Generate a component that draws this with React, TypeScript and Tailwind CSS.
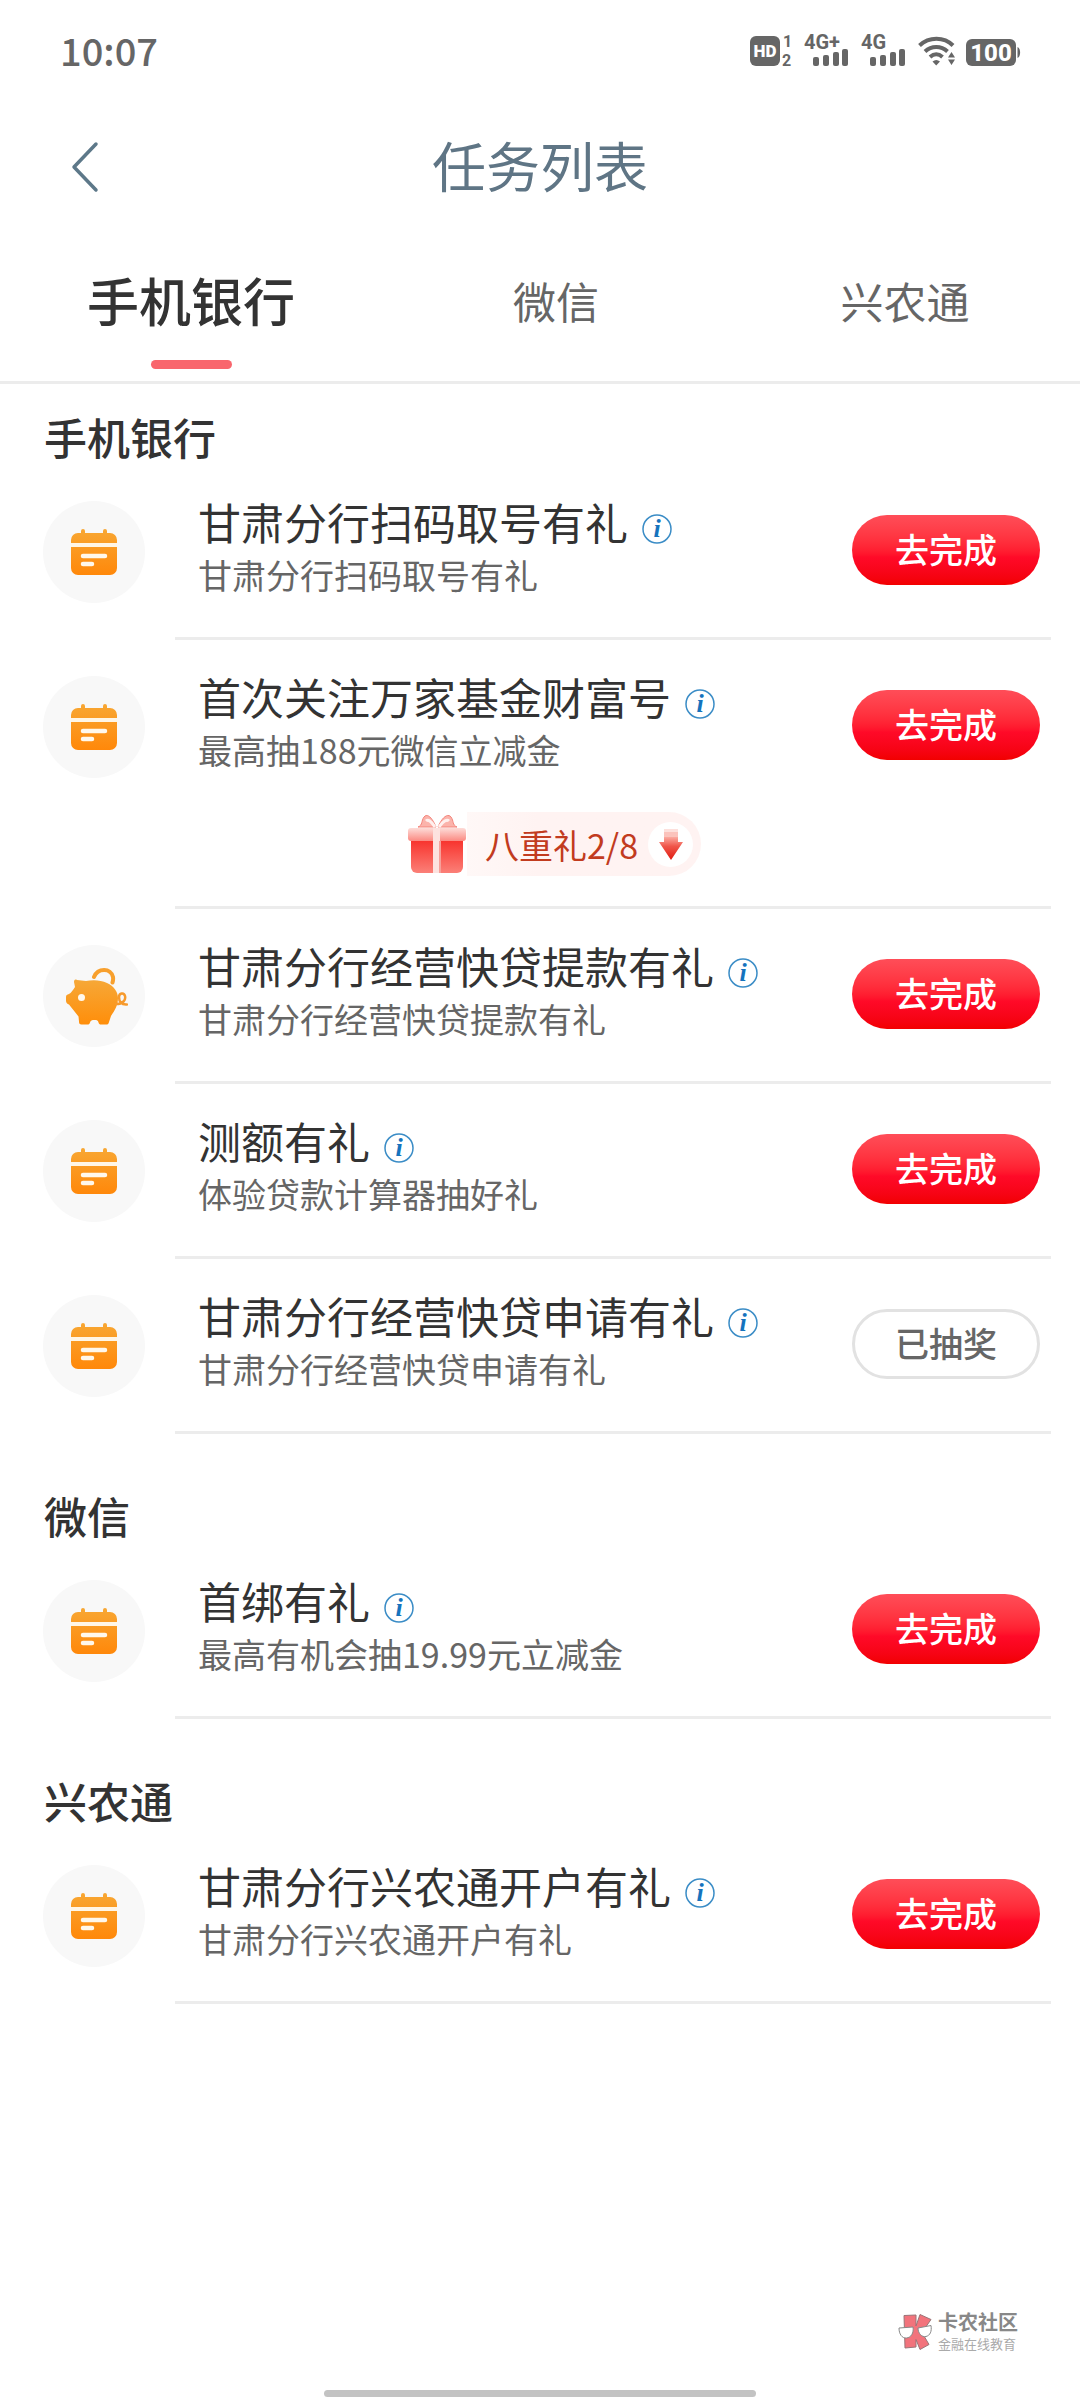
import { useState } from "react";
import clsx from "clsx";

type Task = {
  title: string;
  desc: string;
  icon: "calendar" | "piggy";
  done?: boolean;
  bonus?: string;
};

const tabs = ["手机银行", "微信", "兴农通"];

const sections: { name: string; tasks: Task[] }[] = [
  {
    name: "手机银行",
    tasks: [
      {
        title: "甘肃分行扫码取号有礼",
        desc: "甘肃分行扫码取号有礼",
        icon: "calendar",
      },
      {
        title: "首次关注万家基金财富号",
        desc: "最高抽188元微信立减金",
        icon: "calendar",
        bonus: "八重礼2/8",
      },
      {
        title: "甘肃分行经营快贷提款有礼",
        desc: "甘肃分行经营快贷提款有礼",
        icon: "piggy",
      },
      {
        title: "测额有礼",
        desc: "体验贷款计算器抽好礼",
        icon: "calendar",
      },
      {
        title: "甘肃分行经营快贷申请有礼",
        desc: "甘肃分行经营快贷申请有礼",
        icon: "calendar",
        done: true,
      },
    ],
  },
  {
    name: "微信",
    tasks: [
      {
        title: "首绑有礼",
        desc: "最高有机会抽19.99元立减金",
        icon: "calendar",
      },
    ],
  },
  {
    name: "兴农通",
    tasks: [
      {
        title: "甘肃分行兴农通开户有礼",
        desc: "甘肃分行兴农通开户有礼",
        icon: "calendar",
      },
    ],
  },
];

function SignalIcon({ label }: { label: string }) {
  return (
    <svg width="46" height="44" viewBox="0 -6 46 44" fill="#666">
      <text x="0" y="14" fontSize="20" fontWeight="700" fontFamily="Roboto, sans-serif">
        {label}
      </text>
      <rect x="9" y="22" width="6" height="9" rx="2" />
      <rect x="19" y="20" width="6" height="11" rx="2" />
      <rect x="29" y="17" width="6" height="14" rx="2" />
      <rect x="38" y="14" width="6" height="17" rx="2" />
    </svg>
  );
}

function StatusBar() {
  return (
    <div className="flex h-[102px] items-center justify-between pr-[58px] pl-[60px] text-[#666]">
      <span className="pb-1 text-[38px] font-medium">10:07</span>

      <div className="flex items-center">
        <svg width="44" height="44" viewBox="0 -6 44 44" fill="#666">
          <rect x="0" y="1" width="30" height="30" rx="6" />
          <text
            x="15"
            y="22"
            fontSize="17"
            fontWeight="900"
            textAnchor="middle"
            fill="#fff"
            fontFamily="Roboto, sans-serif"
          >
            HD
          </text>
          <text x="33" y="12" fontSize="16" fontWeight="700" fontFamily="Roboto, sans-serif">
            1
          </text>
          <text x="32" y="31" fontSize="16" fontWeight="700" fontFamily="Roboto, sans-serif">
            2
          </text>
        </svg>
        <div className="ml-[10px]">
          <SignalIcon label="4G+" />
        </div>
        <div className="ml-[11px]">
          <SignalIcon label="4G" />
        </div>
        <svg
          className="ml-[11px]"
          width="38"
          height="32"
          viewBox="0 0 38 32"
          fill="none"
          stroke="#666"
          strokeWidth="4"
        >
          <path d="M1.5 10.5C11 1.5 26 1.5 35 10.5" />
          <path d="M7 16.5C13.5 10.5 23 10.5 29.5 16.5" />
          <path d="M12 22C16 18.5 20.5 18.5 24.5 22" />
          <path d="M14.5 26.5C17 24.5 19.5 24.5 22 26.5L18.2 30.5Z" fill="#666" stroke="none" />
          <path d="M33.5 17L37 22.5H30ZM33.5 30L37 24.5H30Z" fill="#666" stroke="none" />
        </svg>
        <svg className="ml-[10px]" width="56" height="32" viewBox="0 0 56 32" fill="#666">
          <rect x="0" y="4" width="50" height="27" rx="6" />
          <path d="M51.5 12C55 13 55 22 51.5 23Z" />
          <text
            x="25"
            y="26"
            fontSize="24"
            fontWeight="800"
            textAnchor="middle"
            fill="#fff"
            fontFamily="Roboto, sans-serif"
          >
            100
          </text>
        </svg>
      </div>
    </div>
  );
}

function CalendarIcon() {
  return (
    <svg width="46" height="48" viewBox="0 0 46 48">
      <defs>
        <linearGradient id="calendar" x1="0" y1="0" x2="0" y2="1">
          <stop offset="0" stopColor="#f8a733" />
          <stop offset="1" stopColor="#ff880a" />
        </linearGradient>
      </defs>
      <path
        fill="url(#calendar)"
        d="M10 3a2 2 0 0 1 4 0v2h18V3a2 2 0 0 1 4 0v2h3a7 7 0 0 1 7 7v3H0v-3a7 7 0 0 1 7-7h3ZM0 19h46v21a7 7 0 0 1-7 7H7a7 7 0 0 1-7-7Z"
      />
      <path d="M0 15h46v4H0z" fill="#fff6e6" />
      <path d="M12 28h22M12 36h9" stroke="#fff8ec" strokeWidth="4.5" strokeLinecap="round" />
    </svg>
  );
}

function PiggyIcon() {
  return (
    <svg className="ml-1.5" width="62" height="57" viewBox="0 0 62 57" fill="none">
      <defs>
        <linearGradient id="piggy" x1="0" y1="0" x2="0" y2="1">
          <stop offset="0" stopColor="#f6a838" />
          <stop offset="1" stopColor="#ff8e0a" />
        </linearGradient>
      </defs>
      <path
        fill="url(#piggy)"
        d="M8 14c0-2 1-3 3-2l9 1c7-1.5 15-1 21 2 7 3 11 9 11 15 0 7-3 12-7 18l-2 6c-.5 2-1 2.5-3 2.5h-5c-1.5 0-2-.5-2.5-2-.5-2-1.5-2.5-4-2.5s-4 .5-4.5 2.5c-.5 1.5-1 2-2.5 2h-6c-2 0-2.5-1-2.5-3l-.5-5L3 36.5c-2-.5-3-2-3-4V29c0-2 1-2.5 3-3 2-1 4-4 6-7Z"
      />
      <path d="M28 9C32-.5 45 0 47 9c.3 2 0 4-.5 5.5" stroke="#f8a02d" strokeWidth="4" strokeLinecap="round" />
      <path
        d="M50 36c7 0 10-4 9-8s-6-3-6 1 2 8 8 7.5"
        stroke="#f79a2c"
        strokeWidth="2.5"
        strokeLinecap="round"
      />
      <circle cx="15.5" cy="29.5" r="3.5" fill="#fff8ec" />
    </svg>
  );
}

function InfoIcon() {
  return (
    <svg width="30" height="30" viewBox="0 0 30 30">
      <circle cx="15" cy="15" r="14" fill="#fff" stroke="#3a8cc6" strokeWidth="1.5" />
      <text
        x="15"
        y="23"
        fontSize="26"
        fontWeight="700"
        fontStyle="italic"
        textAnchor="middle"
        fill="#1573bd"
        fontFamily="Liberation Serif, serif"
      >
        i
      </text>
    </svg>
  );
}

function GiftIcon() {
  return (
    <svg width="60" height="60" viewBox="0 0 60 60">
      <defs>
        <linearGradient id="giftBox" x1="0" y1="0" x2="0" y2="1">
          <stop offset="0" stopColor="#f8322c" />
          <stop offset="1" stopColor="#fb8078" />
        </linearGradient>
        <linearGradient id="giftLid" x1="0" y1="0" x2="0" y2="1">
          <stop offset="0" stopColor="#fddcd8" />
          <stop offset="1" stopColor="#fb8a82" />
        </linearGradient>
      </defs>
      <path
        d="M29 13C25 3 20-1 17 3c-3 4-1 8-6 10ZM31 13C35 3 41-1 44 3c3 4 1 8 6 10Z"
        fill="#fbb3ab"
        stroke="#f4847b"
        strokeWidth="1"
      />
      <path d="M28 13c-4-6-7-8-9-6M32 13c4-6 8-8 10-6" stroke="#fff0ee" strokeWidth="3" fill="none" />
      <path d="M4 26h52v27a6 6 0 0 1-6 6H10a6 6 0 0 1-6-6Z" fill="url(#giftBox)" />
      <rect x="1" y="14" width="58" height="13" rx="3" fill="url(#giftLid)" />
      <path d="M26 14h7v45h-7z" fill="#fde2df" />
      <path d="M32 27h2v32h-2z" fill="#f6a09a" />
    </svg>
  );
}

function ArrowDown() {
  return (
    <svg width="24" height="32" viewBox="0 0 24 32">
      <defs>
        <linearGradient id="arrow" x1="0" y1="0" x2="0" y2="1">
          <stop offset="0" stopColor="#fbaaa0" />
          <stop offset="0.4" stopColor="#f0564a" />
          <stop offset="1" stopColor="#e01a10" />
        </linearGradient>
      </defs>
      <path d="M5 1h14v3H5z" fill="#fde0dc" />
      <path d="M5 4h14v5H5z" fill="#fbc3bc" />
      <path d="M5 9h14v5h5L12 32 0 14h5Z" fill="url(#arrow)" />
    </svg>
  );
}

function TaskRow({ task }: { task: Task }) {
  return (
    <li>
      <div className="flex items-center pt-7 pr-10 pb-[30px] pl-[43px]">
        <div className="mt-1 flex size-[102px] shrink-0 items-center justify-center rounded-full bg-[#f8f8f8]">
          {task.icon === "piggy" ? <PiggyIcon /> : <CalendarIcon />}
        </div>

        <div className="ml-[53px] flex-1 pb-1.5">
          <div className="flex items-center gap-[14px]">
            <h3 className="text-[43px] leading-[56px] text-[#333]">{task.title}</h3>
            <button type="button" aria-label="活动说明" className="mt-4">
              <InfoIcon />
            </button>
          </div>
          <p className="text-[34px] leading-[52px] text-[#666]">{task.desc}</p>
        </div>

        <button
          type="button"
          disabled={task.done}
          className={clsx(
            "h-[70px] w-[188px] shrink-0 rounded-full pb-1 text-[34px] font-medium",
            task.done
              ? "border-3 border-[#e2e2e2] bg-white text-[#666]"
              : "bg-linear-to-b from-[#ff4d58] via-[#ff0a28] via-60% to-[#f20000] text-white"
          )}
        >
          {task.done ? "已抽奖" : "去完成"}
        </button>
      </div>

      {task.bonus && (
        <div className="flex justify-center pb-[30px] pl-7">
          <button type="button" className="flex items-center">
            <GiftIcon />
            <span className="flex h-16 items-center gap-[10px] rounded-r-full bg-linear-to-r from-[#fff8f7] to-[#fff3f2] to-30% pr-2 pl-[18px] text-[34px] text-[#c23b1e]">
              {task.bonus}
              <span className="flex size-[45px] items-center justify-center rounded-full bg-white">
                <ArrowDown />
              </span>
            </span>
          </button>
        </div>
      )}

      <div className="mr-[29px] ml-[175px] h-[3px] bg-[#ececec]" />
    </li>
  );
}

function Watermark() {
  return (
    <div className="flex items-center justify-end gap-1 pr-[62px] pb-9">
      <svg width="36" height="36" viewBox="0 0 36 36" strokeWidth="1" strokeLinejoin="round">
        <path
          d="M6 1.5L18 1v11L22 .5l11 5-9 13 7 12-9 5-4-10v7.500l-11 1Z"
          fill="#f2737c"
          stroke="#9a7578"
        />
        <path
          d="M1 14l14-1c1 6-2 10.500-6.500 11S1 20 1 14ZM20 14l13-2.500c1 6-1 10-5 11s-8-3-8-8.500Z"
          fill="#fff"
          stroke="#888"
        />
      </svg>
      <div className="text-[#888]">
        <p className="text-[20px] leading-[24px] font-bold">卡农社区</p>
        <p className="text-[13px] leading-[20px] text-[#aaa]">金融在线教育</p>
      </div>
    </div>
  );
}

export default function App() {
  const [active, setActive] = useState(tabs[0]);

  return (
    <div className="flex min-h-screen flex-col bg-white font-['Noto_Sans_CJK_SC',sans-serif]">
      <StatusBar />

      <header className="grid h-[130px] grid-cols-[1fr_auto_1fr] items-center">
        <button type="button" aria-label="返回" className="justify-self-start pl-[70px]">
          <svg width="30" height="52" viewBox="0 0 30 52" fill="none" stroke="#5d7889" strokeWidth="3.5">
            <path d="M26 3L4 26l22 23" strokeLinecap="round" strokeLinejoin="round" />
          </svg>
        </button>
        <h1 className="pb-1.5 text-[54px] text-[#5f7585]">任务列表</h1>
      </header>

      <nav className="grid grid-cols-[382fr_348fr_350fr] border-b-3 border-[#ececec]">
        {tabs.map((tab) => (
          <button
            key={tab}
            type="button"
            onClick={() => setActive(tab)}
            className="flex flex-col items-center pt-9 pb-3"
          >
            <span
              className={clsx(
                "leading-[64px]",
                tab === active ? "text-[52px] font-medium text-[#333]" : "text-[43px] text-[#666]"
              )}
            >
              {tab}
            </span>
            <span
              className={clsx(
                "mt-7 h-[9px] w-[81px] rounded-full",
                tab === active && "bg-[#f9666d]"
              )}
            />
          </button>
        ))}
      </nav>

      <main className="flex flex-col gap-[55px] pt-[26px]">
        {sections.map((section) => (
          <section key={section.name}>
            <h2 className="pb-[3px] pl-11 text-[43px] leading-[52px] font-medium text-[#333]">
              {section.name}
            </h2>
            <ul>
              {section.tasks.map((task) => (
                <TaskRow key={task.title} task={task} />
              ))}
            </ul>
          </section>
        ))}
      </main>

      <footer className="mt-auto pb-[3px]">
        <Watermark />
        <div className="mx-auto h-[7px] w-2/5 rounded-full bg-[#c3c3c3]" />
      </footer>
    </div>
  );
}
